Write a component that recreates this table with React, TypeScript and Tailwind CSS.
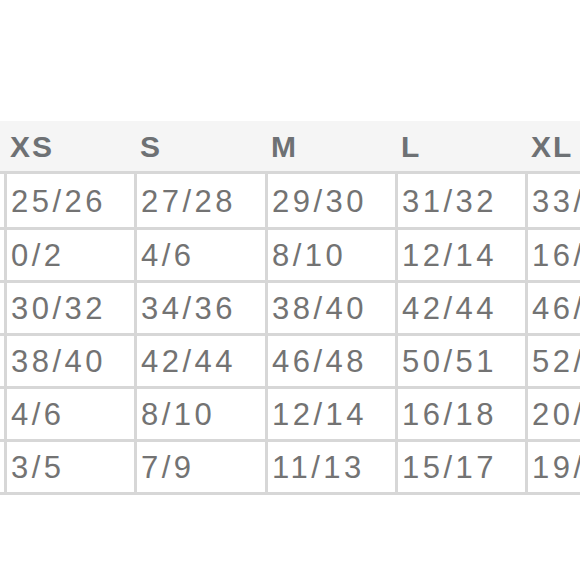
const sizes = ["XS", "S", "M", "L", "XL", "XXL"]

const rows = [
  ["25/26", "27/28", "29/30", "31/32", "33/34", "35/36"],
  ["0/2", "4/6", "8/10", "12/14", "16/18", "20/22"],
  ["30/32", "34/36", "38/40", "42/44", "46/48", "50/52"],
  ["38/40", "42/44", "46/48", "50/51", "52/54", "56/58"],
  ["4/6", "8/10", "12/14", "16/18", "20/22", "24/26"],
  ["3/5", "7/9", "11/13", "15/17", "19/21", "23/25"],
]

const cols = "grid grid-cols-[127px_127px_128px_127px_127px_127px_127px] gap-x-[3px]"

export default function App() {
  return (
    <div className="w-[580px] h-[580px] overflow-hidden bg-white font-['Liberation_Sans',Arial,sans-serif]">
      <div className="pt-[121px]">
        <div className="bg-[#f5f5f5]">
          <div className={`${cols} ml-[-123px] h-[50px] items-center`}>
            <div />
            {sizes.map((s) => (
              <div key={s} className="pl-[3px] text-[30px] font-bold tracking-[2px] text-[#6e7174] whitespace-nowrap">
                {s}
              </div>
            ))}
          </div>
        </div>
        <div className={`${cols} gap-y-[3px] py-[3px] bg-[#d7d7d7] ml-[-123px] w-max grid-rows-[53px_50px_50px_50px_50px_50px]`}>
          {rows.map((values, r) => (
            <>
              <div key={"label" + r} className="bg-white" />
              {values.map((v, i) => (
                <div
                  key={r + "-" + i}
                  className="bg-white pl-[4px] pt-[3px] flex items-center text-[31px] tracking-[3.5px] text-[#737373] whitespace-nowrap"
                >
                  {v}
                </div>
              ))}
            </>
          ))}
        </div>
      </div>
    </div>
  )
}
